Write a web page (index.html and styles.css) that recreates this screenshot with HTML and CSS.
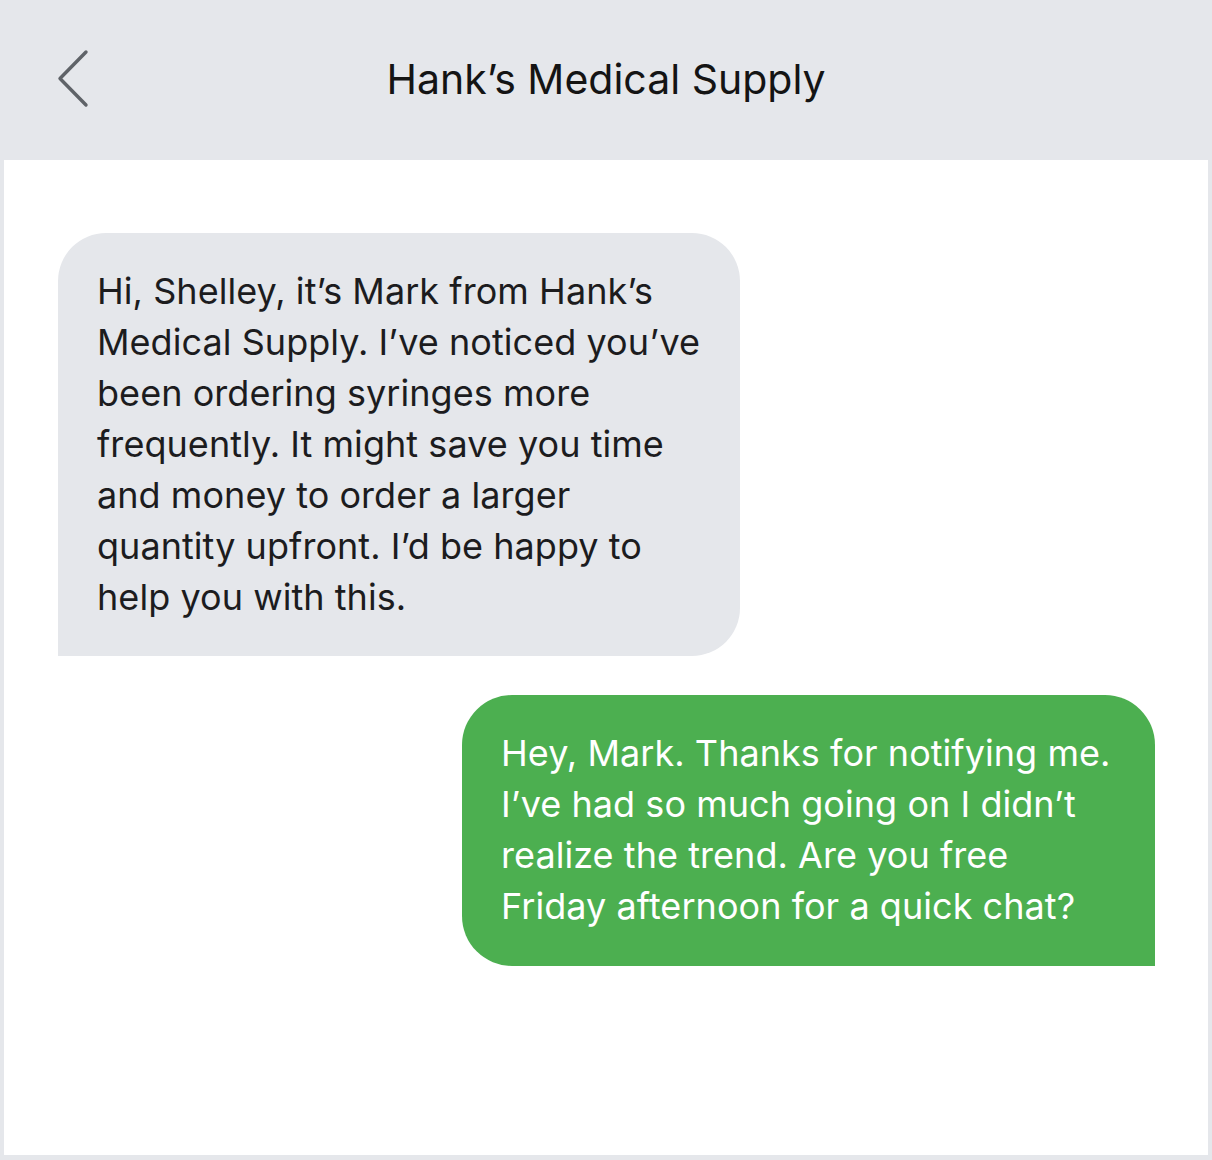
FILE: index.html
```html
<!DOCTYPE html>
<html lang="en">
<head>
    <meta charset="UTF-8">
    <meta name="viewport" content="width=device-width, initial-scale=1.0">
    <title>Hank's Medical Supply</title>
    <link rel="stylesheet" href="styles.css">
</head>
<body>
    <header class="topbar">
        <button class="back" aria-label="Back">
            <svg width="36" height="62" viewBox="0 0 36 62">
                <path d="M30 4 L4 30.5 L30 57" fill="none" stroke="#5f6368" stroke-width="3.4" stroke-linecap="round" stroke-linejoin="round"/>
            </svg>
        </button>
        <h1 class="title">Hank’s Medical Supply</h1>
        <span></span>
    </header>

    <main class="thread">
        <div class="bubble incoming">
            Hi, Shelley, it’s Mark from Hank’s<br>
            Medical Supply. I’ve noticed you’ve<br>
            been ordering syringes more<br>
            frequently. It might save you time<br>
            and money to order a larger<br>
            quantity upfront. I’d be happy to<br>
            help you with this.
        </div>
        <div class="bubble outgoing">
            Hey, Mark. Thanks for notifying me.<br>
            I’ve had so much going on I didn’t<br>
            realize the trend. Are you free<br>
            Friday afternoon for a quick chat?
        </div>
    </main>
</body>
</html>
```

FILE: styles.css
```css
:root {
    --gray-bg: #e5e7eb;
    --green: #4caf50;
    --ink: #141414;
}
body {
    margin: 0;
    background: var(--gray-bg);
    font-family: Inter, "Open Sans", sans-serif;
    color: var(--ink);
}
.topbar {
    height: 160px;
    display: grid;
    grid-template-columns: 1fr auto 1fr;
    align-items: center;
}
.back {
    justify-self: start;
    margin-left: 56px;
    margin-top: -2px;
    padding: 0;
    border: none;
    background: none;
    display: flex;
}
.title {
    margin: 0;
    font-size: 41px;
    font-weight: 400;
    letter-spacing: 0;
    padding-bottom: 2px;
}
.thread {
    background: #fff;
    margin: 0 4px 5px;
    height: 995px;
    box-sizing: border-box;
    padding: 73px 53px 0 54px;
    display: flex;
    flex-direction: column;
    gap: 39px;
}
.bubble {
    font-size: 36px;
    line-height: 51px;
    letter-spacing: 0.05px;
    padding: 33px 20px 33px 39px;
    box-sizing: border-box;
    white-space: nowrap;
}
.incoming {
    align-self: flex-start;
    width: 682px;
    height: 423px;
    background: var(--gray-bg);
    border-radius: 48px 48px 48px 0;
    color: #1c1c1e;
}
.outgoing {
    align-self: flex-end;
    width: 693px;
    height: 271px;
    background: var(--green);
    border-radius: 50px 50px 0 50px;
    color: #fff;
}
```
